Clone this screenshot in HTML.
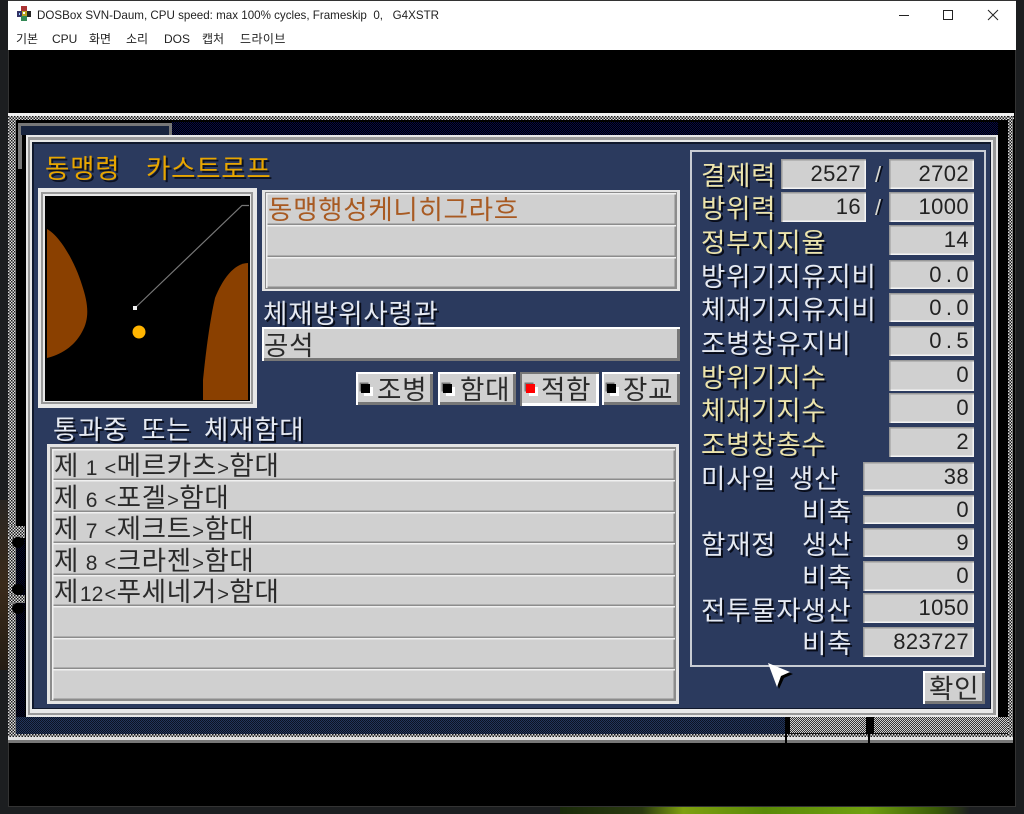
<!DOCTYPE html>
<html><head><meta charset="utf-8">
<style>
html,body{margin:0;padding:0;background:#1c1e20}
#p{position:relative;width:1024px;height:814px;overflow:hidden;background:#1c1e20}
#p div{position:absolute;box-sizing:border-box}
#g{left:0;top:113px;width:1024px;height:640px;filter:blur(.35px)}
#i{left:0;top:-113px;width:1024px;height:814px}
.k{font-family:"Noto Sans CJK KR","NanumGothic",sans-serif;font-size:26.5px;letter-spacing:.7px;white-space:pre;line-height:30px;height:30px}
.l{color:#ece4ac;text-shadow:2px 2px 0 #080c18}
.w{color:#e6eaf2;text-shadow:2px 2px 0 #080c18}
.y{color:#e8a600;text-shadow:2px 2px 0 #0c1222}
.b{color:#2a2a2a}
.d{display:inline-block;width:25px;text-align:center;letter-spacing:0;font:21px "Liberation Sans",sans-serif}
.h{display:inline-block;width:12.5px;text-align:center;letter-spacing:0;font:20px "Liberation Mono",monospace}
.f{background:#d0d0d0;box-shadow:inset 1.5px 1.5px 0 #999,inset -1.5px -1.5px 0 #f4f4f4;font:22px/30px "Liberation Sans",sans-serif;letter-spacing:.4px;color:#222;text-align:right;padding-right:5px}
.r{background:#d0d0d0;box-shadow:inset 1.5px 1.5px 0 #f0f0f0,inset -1.5px -1.5px 0 #8c8c8c}
.o{background:#e4e4e4}
.btn{background:#d0d0d0;box-shadow:inset 2px 2px 0 #fff,inset -3px -3px 0 #777}
.sel{box-shadow:inset 2px 2px 0 #777,inset -3px -3px 0 #fff}
.ind{width:9px;height:9px;background:#000;box-shadow:3px 3px 0 #fff,-1.500px -1.500px 0 #777}
.dots{background:repeating-conic-gradient(#e0e0e0 0 25%,#1a1a1a 0 50%) 0 0/3px 3px}
.nv{background:repeating-conic-gradient(#000 0 25%,#060a48 0 50%) 0 0/2px 2px}
.nv2{background:repeating-conic-gradient(#000 0 25%,#040628 0 50%) 0 0/2px 2px}
.dk{background:repeating-conic-gradient(#0c1222 0 25%,#22365c 0 50%) 0 0/2px 2px}
.gr{background:repeating-conic-gradient(#cfcfcf 0 25%,#333 0 50%) 0 0/2px 2px}
</style></head><body>
<div id="p">
<!-- desktop -->
<div style="left:0;top:500px;width:8px;height:170px;background:linear-gradient(#2a2622,#3a2a1a 50%,#241c14)"></div>
<div style="left:560px;top:806px;width:410px;height:8px;background:linear-gradient(90deg,#1a2a0a,#2a3a10 20%,#7ea010 30%,#5a8a08 50%,#70a010 75%,#3a5a08 92%,#1c1e20)"></div>
<!-- window -->
<div style="left:8px;top:0;width:1008px;height:807px;background:#000;box-shadow:inset 0 0 0 1px #333"></div>
<div style="left:8px;top:1px;width:1008px;height:49px;background:#fff"></div>
<svg style="position:absolute;left:16px;top:6px" width="16" height="16" viewBox="0 0 16 16"><rect x="5" y="0" width="6" height="5" fill="#a33"/><rect x="1" y="5" width="5" height="6" fill="#336"/><rect x="6" y="5" width="5" height="5" fill="#b8a020"/><rect x="11" y="5" width="4" height="6" fill="#252525"/><rect x="5" y="10" width="6" height="5" fill="#385"/><rect x="7" y="6" width="2" height="2" fill="#fff"/><rect x="3" y="7" width="1" height="2" fill="#9cf"/></svg>
<div style="left:37px;top:7px;height:17px;font:11.6px/17px 'Liberation Sans',sans-serif;color:#222;white-space:pre">DOSBox SVN-Daum, CPU speed: max 100% cycles, Frameskip  0,   G4XSTR</div>
<div style="left:16px;top:31px;height:16px;font:12px/16px 'Liberation Sans','Noto Sans CJK KR',sans-serif;color:#222">기본</div>
<div style="left:52px;top:31px;height:16px;font:12px/16px 'Liberation Sans','Noto Sans CJK KR',sans-serif;color:#222">CPU</div>
<div style="left:89px;top:31px;height:16px;font:12px/16px 'Liberation Sans','Noto Sans CJK KR',sans-serif;color:#222">화면</div>
<div style="left:126px;top:31px;height:16px;font:12px/16px 'Liberation Sans','Noto Sans CJK KR',sans-serif;color:#222">소리</div>
<div style="left:164px;top:31px;height:16px;font:12px/16px 'Liberation Sans','Noto Sans CJK KR',sans-serif;color:#222">DOS</div>
<div style="left:202px;top:31px;height:16px;font:12px/16px 'Liberation Sans','Noto Sans CJK KR',sans-serif;color:#222">캡처</div>
<div style="left:240px;top:31px;height:16px;font:12px/16px 'Liberation Sans','Noto Sans CJK KR',sans-serif;color:#222;letter-spacing:.4px">드라이브</div>
<svg style="position:absolute;left:890px;top:5px" width="120" height="20" viewBox="0 0 120 20" fill="none" stroke="#222" stroke-width="1"><path d="M9 10.500H19"/><rect x="53.500" y="5.500" width="9" height="9"/><path d="M98 5L108 15M108 5L98 15"/></svg>
<div id="g"><div id="i">
<!-- game frame -->
<div style="left:8px;top:113px;width:1006px;height:4px;background:#f0f0f0"></div>
<div class="dots" style="left:8px;top:116px;width:1006px;height:4px"></div>
<div class="nv" style="left:172px;top:122px;width:826px;height:13px"></div>
<div class="dots" style="left:8px;top:116px;width:8px;height:622px"></div>
<div class="dots" style="left:1008px;top:116px;width:5px;height:622px"></div>
<div style="left:18px;top:123px;width:154px;height:12px;border:solid #777;border-width:3px 3px 0 3px;background:#18243e"></div>
<div style="left:18px;top:135px;width:4px;height:34px;background:#777"></div>
<div class="dots" style="left:8px;top:526px;width:17px;height:12px"></div>
<div class="dots" style="left:8px;top:595px;width:17px;height:8px"></div>
<div class="nv2" style="left:16px;top:540px;width:9px;height:55px"></div>
<div class="nv2" style="left:16px;top:603px;width:9px;height:120px"></div>
<div style="left:12px;top:584px;width:12px;height:11px;background:#000;border-radius:50%"></div>
<div style="left:12px;top:603px;width:12px;height:11px;background:#000;border-radius:50%"></div>
<div style="left:12px;top:537px;width:12px;height:11px;background:#000;border-radius:50%"></div>
<div class="dk" style="left:16px;top:717px;width:770px;height:18px"></div>
<div class="gr" style="left:790px;top:717px;width:76px;height:18px;border-bottom:2px solid #111"></div>
<div class="gr" style="left:874px;top:717px;width:134px;height:18px;border-bottom:2px solid #111"></div>
<div class="dots" style="left:8px;top:734px;width:1000px;height:3px"></div>
<div style="left:8px;top:737px;width:1005px;height:3px;background:#e0e0e0"></div>
<div style="left:8px;top:740px;width:1005px;height:3px;background:#777"></div>
<div style="left:785px;top:717px;width:2px;height:26px;background:#000"></div>
<div style="left:868px;top:717px;width:2px;height:26px;background:#000"></div>
<!-- dialog -->
<div style="left:26px;top:135px;width:972px;height:582px;background:#e8e8e8"></div>
<div style="left:28px;top:137px;width:968px;height:578px;background:#999"></div>
<div style="left:30px;top:140px;width:963px;height:573px;background:#e8e8e8"></div>
<div style="left:32px;top:142px;width:959px;height:567px;background:#10182c"></div>
<div style="left:34px;top:144px;width:956px;height:564px;background:#2b3a5e"></div>
<!-- title -->
<div class="k y" style="left:45px;top:152px">동맹령</div>
<div class="k y" style="left:146px;top:152px">카스트로프</div>
<!-- map -->
<div style="left:38px;top:188px;width:219px;height:220px;background:#e8e8e8"></div>
<div style="left:41px;top:192px;width:212px;height:212px;background:#999"></div>
<div style="left:43px;top:194px;width:208px;height:208px;background:#e8e8e8"></div>
<svg style="position:absolute;left:45px;top:196px" width="205" height="205" viewBox="45 196 205 205">
<rect x="45" y="196" width="205" height="205" fill="#000"/>
<path d="M47 229C60 236 75 262 82 285C88 303 90 318 82 332C74 347 60 355 47 358Z" fill="#8a4000"/>
<path d="M248 263C234 263 222 280 215 298C210 320 206 350 203 380L203 400L248 400Z" fill="#8a4000"/>
<path d="M135 308L242 205.500H249" fill="none" stroke="#777" stroke-width="1.200"/>
<rect x="133" y="306" width="4" height="4" fill="#eee"/>
<circle cx="139" cy="332" r="6.500" fill="#ffb400"/>
</svg>
<!-- top fields -->
<div class="o" style="left:262px;top:190px;width:418px;height:101px"></div>
<div style="left:265px;top:192px;width:412px;height:97px;background:#8c8c8c"></div>
<div class="r" style="left:266px;top:193px;width:410px;height:32px"></div>
<div class="r" style="left:266px;top:225px;width:410px;height:32px"></div>
<div class="r" style="left:266px;top:257px;width:410px;height:31px"></div>
<div class="k" style="left:268px;top:193px;color:#a85a22">동맹행성케니히그라흐</div>
<div class="k w" style="left:263px;top:297px">체재방위사령관</div>
<div class="btn" style="left:262px;top:327px;width:418px;height:34px"></div>
<div class="k b" style="left:264px;top:329px">공석</div>
<!-- buttons -->
<div class="btn" style="left:356px;top:372px;width:77px;height:33px"></div>
<div class="ind" style="left:361px;top:384px"></div>
<div class="k b" style="left:377px;top:373px">조병</div>
<div class="btn" style="left:438px;top:372px;width:78px;height:33px"></div>
<div class="ind" style="left:443px;top:384px"></div>
<div class="k b" style="left:460px;top:373px">함대</div>
<div class="btn sel" style="left:520px;top:372px;width:79px;height:34px"></div>
<div class="ind" style="left:526px;top:384px;background:#f00"></div>
<div class="k b" style="left:541px;top:373px">적함</div>
<div class="btn" style="left:602px;top:372px;width:78px;height:33px"></div>
<div class="ind" style="left:607px;top:384px"></div>
<div class="k b" style="left:623px;top:373px">장교</div>
<!-- list -->
<div class="k w" style="left:53px;top:413px">통과중</div>
<div class="k w" style="left:141px;top:413px">또는</div>
<div class="k w" style="left:204px;top:413px">체재함대</div>
<div class="o" style="left:47px;top:444px;width:632px;height:260px"></div>
<div style="left:50px;top:447px;width:626px;height:254px;background:#8c8c8c"></div>
<div class="r" style="left:52px;top:449px;width:623px;height:31px"></div>
<div class="r" style="left:52px;top:480px;width:623px;height:32px"></div>
<div class="r" style="left:52px;top:512px;width:623px;height:31px"></div>
<div class="r" style="left:52px;top:543px;width:623px;height:32px"></div>
<div class="r" style="left:52px;top:575px;width:623px;height:31px"></div>
<div class="r" style="left:52px;top:606px;width:623px;height:32px"></div>
<div class="r" style="left:52px;top:638px;width:623px;height:31px"></div>
<div class="r" style="left:52px;top:669px;width:623px;height:31px"></div>
<div class="k b" style="left:54px;top:449px">제<span class="d">1</span><span class="h">&lt;</span>메르카츠<span class="h">&gt;</span>함대</div>
<div class="k b" style="left:54px;top:481px">제<span class="d">6</span><span class="h">&lt;</span>포겔<span class="h">&gt;</span>함대</div>
<div class="k b" style="left:54px;top:512px">제<span class="d">7</span><span class="h">&lt;</span>제크트<span class="h">&gt;</span>함대</div>
<div class="k b" style="left:54px;top:544px">제<span class="d">8</span><span class="h">&lt;</span>크라젠<span class="h">&gt;</span>함대</div>
<div class="k b" style="left:54px;top:575px">제<span class="d">12</span><span class="h">&lt;</span>푸세네거<span class="h">&gt;</span>함대</div>
<!-- right panel -->
<div style="left:690px;top:150px;width:296px;height:517px;border:2px solid #c8ccd4"></div>
<div class="k l" style="left:701px;top:159px">결제력</div>
<div class="k l" style="left:701px;top:192px">방위력</div>
<div class="k l" style="left:701px;top:226px">정부지지율</div>
<div class="k w" style="left:701px;top:260px">방위기지유지비</div>
<div class="k w" style="left:701px;top:293px">체재기지유지비</div>
<div class="k w" style="left:701px;top:327px">조병창유지비</div>
<div class="k l" style="left:701px;top:361px">방위기지수</div>
<div class="k l" style="left:701px;top:394px">체재기지수</div>
<div class="k l" style="left:701px;top:428px">조병창총수</div>
<div class="k w" style="left:701px;top:462px">미사일</div>
<div class="k w" style="left:789px;top:462px">생산</div>
<div class="k w" style="left:802px;top:495px">비축</div>
<div class="k w" style="left:701px;top:528px">함재정</div>
<div class="k w" style="left:802px;top:528px">생산</div>
<div class="k w" style="left:802px;top:561px">비축</div>
<div class="k w" style="left:701px;top:594px">전투물자생산</div>
<div class="k w" style="left:802px;top:627px">비축</div>
<div style="left:875px;top:161px;height:28px;width:14px;font:22px/28px 'Liberation Sans',sans-serif;color:#d8d8d0;text-shadow:2px 0 0 #080c18">/</div>
<div style="left:875px;top:194px;height:28px;width:14px;font:22px/28px 'Liberation Sans',sans-serif;color:#d8d8d0;text-shadow:2px 0 0 #080c18">/</div>
<div class="f" style="left:781px;top:159px;width:85px;height:30px">2527</div>
<div class="f" style="left:889px;top:159px;width:85px;height:30px">2702</div>
<div class="f" style="left:781px;top:192px;width:85px;height:30px">16</div>
<div class="f" style="left:889px;top:192px;width:85px;height:30px">1000</div>
<div class="f" style="left:889px;top:225px;width:85px;height:30px">14</div>
<div class="f" style="left:889px;top:260px;width:85px;height:29px">0<span style="margin:0 4px">.</span>0</div>
<div class="f" style="left:889px;top:293px;width:85px;height:29px">0<span style="margin:0 4px">.</span>0</div>
<div class="f" style="left:889px;top:326px;width:85px;height:30px">0<span style="margin:0 4px">.</span>5</div>
<div class="f" style="left:889px;top:360px;width:85px;height:31px">0</div>
<div class="f" style="left:889px;top:393px;width:85px;height:30px">0</div>
<div class="f" style="left:889px;top:427px;width:85px;height:30px">2</div>
<div class="f" style="left:863px;top:462px;width:111px;height:29px">38</div>
<div class="f" style="left:863px;top:495px;width:111px;height:29px">0</div>
<div class="f" style="left:863px;top:528px;width:111px;height:29px">9</div>
<div class="f" style="left:863px;top:561px;width:111px;height:30px">0</div>
<div class="f" style="left:863px;top:593px;width:111px;height:30px">1050</div>
<div class="f" style="left:863px;top:627px;width:111px;height:30px">823727</div>
<!-- ok button -->
<div class="btn" style="left:923px;top:671px;width:62px;height:33px"></div>
<div class="k b" style="left:929px;top:672px">확인</div>
<!-- cursor -->
<svg style="position:absolute;left:760px;top:656px" width="40" height="40" viewBox="760 656 40 40"><path d="M770 665L793 674L784 678L779 689Z" fill="#000"/><path d="M768 663L790 672L781 676L777 687Z" fill="#fff"/></svg>
</div></div>
</div>
</body></html>
